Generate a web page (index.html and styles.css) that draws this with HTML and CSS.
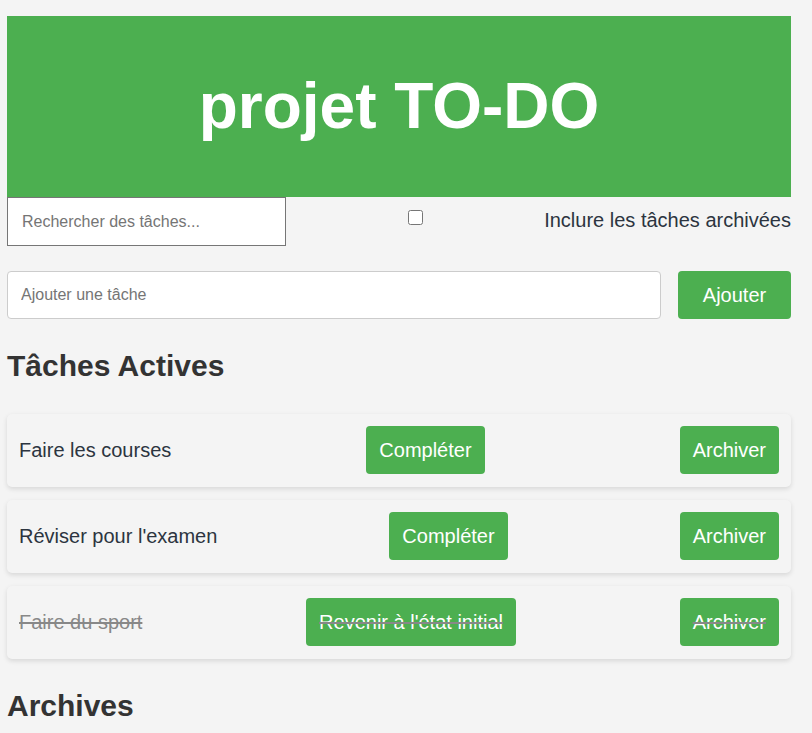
FILE: index.html
```html
<!DOCTYPE html>
<html lang="fr">
<head>
<meta charset="utf-8">
<title>projet TO-DO</title>
<link rel="stylesheet" href="styles.css">
</head>
<body>
<div class="app">
  <header class="header">
    <h1 class="title">projet TO-DO</h1>
  </header>

  <div class="search-row">
    <input class="search-input" type="text" placeholder="Rechercher des tâches...">
    <input class="archive-check" type="checkbox" id="incl">
    <label class="archive-label" for="incl">Inclure les tâches archivées</label>
  </div>

  <div class="add-row">
    <input class="add-input" type="text" placeholder="Ajouter une tâche">
    <button class="btn add-btn">Ajouter</button>
  </div>

  <h2 class="section-title">Tâches Actives</h2>

  <div class="task">
    <span class="task-text">Faire les courses</span>
    <button class="btn">Compléter</button>
    <button class="btn">Archiver</button>
  </div>
  <div class="task">
    <span class="task-text">Réviser pour l'examen</span>
    <button class="btn">Compléter</button>
    <button class="btn">Archiver</button>
  </div>
  <div class="task done">
    <span class="task-text">Faire du sport</span>
    <button class="btn">Revenir à l'état initial</button>
    <button class="btn">Archiver</button>
  </div>

  <h2 class="section-title">Archives</h2>
</div>
</body>
</html>
```

FILE: styles.css
```css
html, body {
  margin: 0;
  padding: 0;
  background: #f4f4f4;
}

body {
  font-family: "Liberation Sans", Arial, sans-serif;
  font-size: 20px;
  color: #333;
}

.app {
  margin: 16px 21px 0 7px;
}

.header {
  background: #4caf50;
  height: 181px;
  display: flex;
  align-items: center;
  justify-content: center;
}

.title {
  margin: 0;
  color: #fff;
  font-size: 64px;
  font-weight: bold;
  line-height: 1.15;
}

.search-row {
  display: flex;
  justify-content: space-between;
  align-items: flex-start;
}

.search-input {
  box-sizing: border-box;
  width: 279px;
  height: 49px;
  margin: 0;
  padding: 0 14px;
  border: 1px solid #767676;
  border-radius: 0;
  background: #fff;
  font-family: "Liberation Sans", Arial, sans-serif;
  font-size: 16px;
  color: #333;
}

.search-input::placeholder,
.add-input::placeholder {
  color: #757575;
}

.archive-check {
  width: 15px;
  height: 15px;
  margin: 13px 0 0 0;
}

.archive-label {
  margin-top: 12px;
  font-size: 20px;
  color: #2c3440;
}

.add-row {
  display: flex;
  gap: 17px;
  margin-top: 25px;
}

.add-input {
  box-sizing: border-box;
  flex: 1;
  height: 48px;
  margin: 0;
  padding: 0 13px;
  border: 1px solid #ccc;
  border-radius: 4px;
  background: #fff;
  font-family: "Liberation Sans", Arial, sans-serif;
  font-size: 16px;
}

.btn {
  box-sizing: border-box;
  height: 48px;
  padding: 0 13px;
  border: none;
  border-radius: 4px;
  background: #4caf50;
  color: #fff;
  font-family: "Liberation Sans", Arial, sans-serif;
  font-size: 20px;
  cursor: pointer;
}

.add-btn {
  width: 113px;
}

.section-title {
  margin: 30px 0 30px 0;
  font-size: 30px;
  font-weight: bold;
  line-height: 1.15;
  color: #333;
}

.task {
  display: flex;
  justify-content: space-between;
  align-items: center;
  padding: 12px 12px 12px 12px;
  min-height: 49px;
  margin-bottom: 13px;
  background: #f4f4f4;
  border-radius: 5px;
  box-shadow: 0 2px 5px rgba(0, 0, 0, 0.12);
}

.task-text {
  font-size: 20px;
  color: #2c3440;
}

.task.done {
  text-decoration: line-through;
  color: #888;
}

.task.done .task-text {
  color: #888;
}
```
